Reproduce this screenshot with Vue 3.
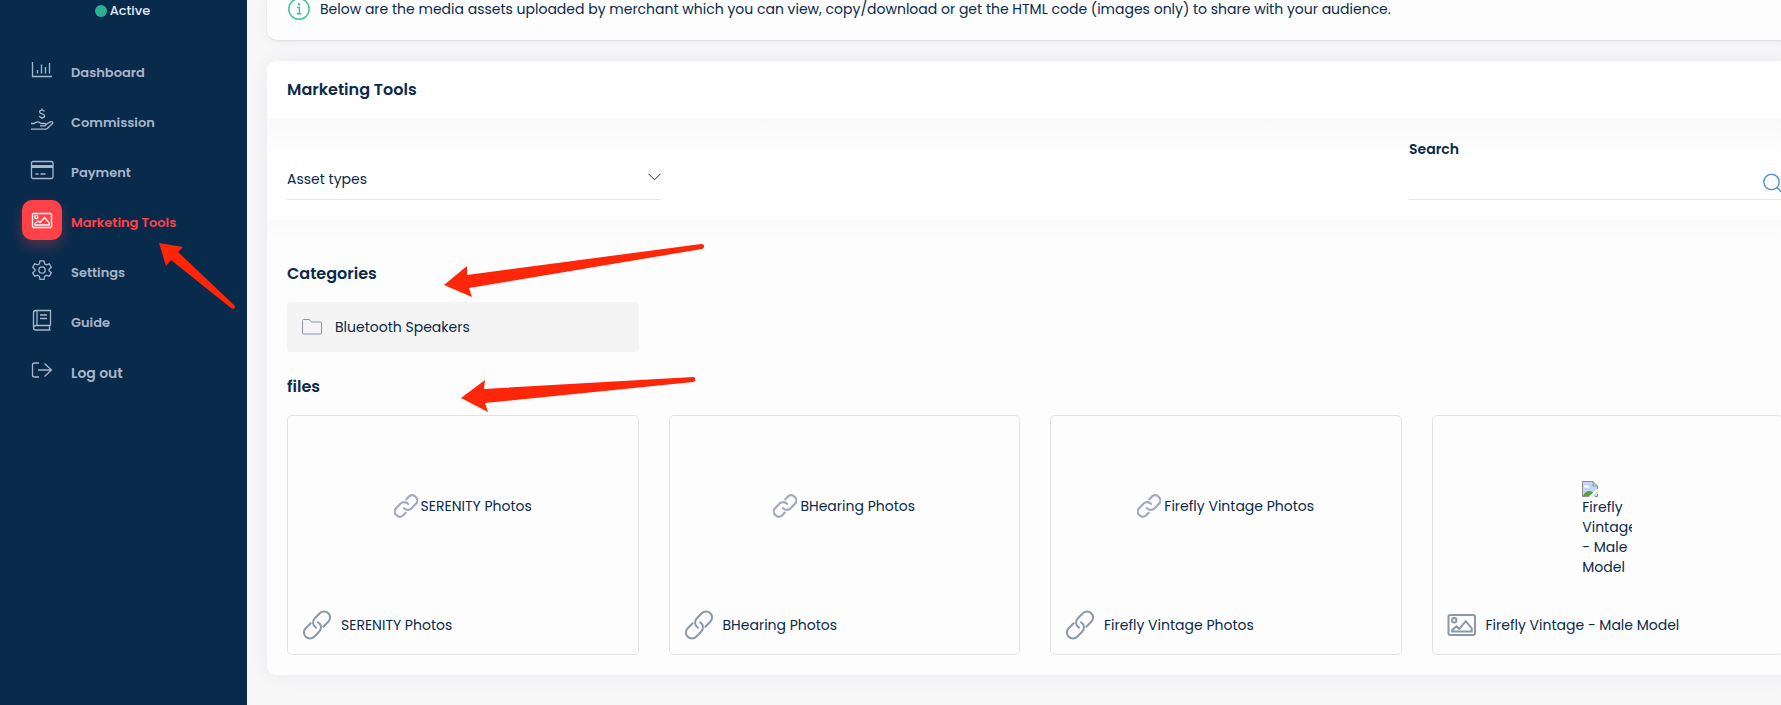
<script setup>
import { ref } from "vue";

const menuList = [
  { icon: "chart", label: "Dashboard" },
  { icon: "hand", label: "Commission" },
  { icon: "card", label: "Payment" },
  { icon: "image", label: "Marketing Tools", active: true },
  { icon: "gear", label: "Settings" },
  { icon: "book", label: "Guide" },
  { icon: "logout", label: "Log out", logout: true }
];

const categories = ["Bluetooth Speakers"];

const files = [
  { type: "link", name: "SERENITY Photos" },
  { type: "link", name: "BHearing Photos" },
  { type: "link", name: "Firefly Vintage Photos" },
  { type: "image", name: "Firefly Vintage - Male Model" }
];

const assetType = ref("");
const search = ref("");
</script>

<template>
  <div class="layout">
    <aside class="sidebar">
      <div class="status"><span class="dot"></span>Active</div>
      <nav class="menu">
        <a
          v-for="item in menuList"
          :key="item.label"
          href="#"
          class="menu-item"
          :class="{ active: item.active, logout: item.logout }"
        >
          <span class="menu-icon">
            <svg v-if="item.icon === 'chart'" width="24" height="24" viewBox="0 0 24 24">
              <path d="M2.500 4v14.500H22M7.500 15.500v-3.500M11.500 15.500V6.500M15.500 15.500V9M19.500 15.500V5" />
            </svg>
            <svg v-else-if="item.icon === 'hand'" width="24" height="24" viewBox="0 0 24 24">
              <path d="M14.500 3.500c-.4-1-1.300-1.400-2.500-1.400-1.400 0-2.400.7-2.400 1.800 0 2.700 5 1.200 5 3.800 0 1.200-1.100 1.900-2.600 1.900-1.300 0-2.300-.6-2.600-1.700M12 .6v1.500M12 9.600v1.500" />
              <path d="M1 15.500h3c2-2 5-2 7 0h3.500c2 0 2 2.300 0 2.300H10M15.800 16.500l4.400-2.600c2-1 3.400.6 2 1.900l-5 4.700c-.6.5-1.200.7-2 .7H1" />
            </svg>
            <svg v-else-if="item.icon === 'card'" width="24" height="24" viewBox="0 0 24 24">
              <rect x="1.500" y="3.500" width="21.500" height="17" rx="1.500" />
              <path d="M1.500 8.500h21.500" stroke-width="3" />
              <path d="M5.500 16h3M10.500 16h5" />
            </svg>
            <svg v-else-if="item.icon === 'image'" width="24" height="24" viewBox="0 0 24 24">
              <rect x="2.500" y="5.500" width="19" height="14" rx="1" />
              <circle cx="6.300" cy="9" r="1.600" />
              <path d="M5 17v-1.500l3-2.500 2 1.500 4.500-5 4.500 5V17z" />
            </svg>
            <svg v-else-if="item.icon === 'gear'" width="24" height="24" viewBox="0 0 24 24">
              <circle cx="12" cy="12" r="3.200" />
              <path d="M10 2.800h4l.6 3 1.800 1 2.900-1 2 3.500-2.300 2v1.500l2.300 2-2 3.500-2.900-1-1.800 1-.6 3h-4l-.6-3-1.800-1-2.900 1-2-3.500 2.300-2v-1.500l-2.300-2 2-3.500 2.900 1 1.800-1z" />
            </svg>
            <svg v-else-if="item.icon === 'book'" width="24" height="24" viewBox="0 0 24 24">
              <path d="M20.500 17.500V2.500H6c-1.500 0-2.500 1-2.500 2.200v15c0 1.400 1 2.300 2.500 2.300h14.500M20.500 17.500H6c-3.300 0-3.300 4.500 0 4.500M19.500 17.500V22M7 2.500v15M10 7h7M10 10.500h7" />
            </svg>
            <svg v-else width="24" height="24" viewBox="0 0 24 24">
              <path d="M9 5H4.500C3.300 5 2.500 5.800 2.500 7v10c0 1.200.8 2 2 2H9M8 12h13.500M14.500 5.500l7 6.500-7 6.500" />
            </svg>
          </span>
          <span class="menu-label">{{ item.label }}</span>
        </a>
      </nav>
    </aside>

    <main class="content">
      <section class="notice">
        <svg class="info-icon" width="22" height="22" viewBox="0 0 22 22">
          <circle cx="11" cy="11" r="10.200" />
          <path d="M9 9.500h2.400v6M8.800 15.700h4.600" />
          <circle class="info-dot" cx="11" cy="6.300" r="1.200" />
        </svg>
        <p>Below are the media assets uploaded by merchant which you can view, copy/download or get the HTML code (images only) to share with your audience.</p>
      </section>

      <section class="panel">
        <header class="panel-header">
          <h1>Marketing Tools</h1>
        </header>

        <form class="filters" @submit.prevent>
          <div class="select-wrap">
            <select v-model="assetType" aria-label="Asset types">
              <option value="">Asset types</option>
              <option value="link">Links</option>
              <option value="image">Images</option>
            </select>
            <svg class="chevron" width="13" height="8" viewBox="0 0 13 8">
              <path d="M.5.800l6 6 6-6" />
            </svg>
          </div>
          <div class="search-field">
            <label for="search">Search</label>
            <div class="search-row">
              <input id="search" v-model="search" type="text" />
              <button type="submit" aria-label="Search">
                <svg width="21" height="22" viewBox="0 0 21 22">
                  <circle cx="9.500" cy="9" r="7.700" />
                  <path d="M15 14.500l6 6" />
                </svg>
              </button>
            </div>
          </div>
        </form>

        <div class="panel-body">
          <h2>Categories</h2>
          <div class="grid">
            <a v-for="category in categories" :key="category" href="#" class="category">
              <svg width="22" height="18" viewBox="0 0 22 18">
                <path d="M1.500 2.500c0-.6.400-1 1-1h5.600l2.600 2.500h8.800c.6 0 1 .4 1 1v10c0 .6-.4 1-1 1h-17c-.6 0-1-.4-1-1z" />
              </svg>
              {{ category }}
            </a>
          </div>

          <h2>files</h2>
          <div class="grid">
            <article v-for="file in files" :key="file.name" class="file">
              <div class="preview">
                <a v-if="file.type === 'link'" href="#" class="preview-link">
                  <svg width="24" height="24" viewBox="1 1 22 22">
                    <path d="M12.300 5.900l2.800-2.900a4.700 4.700 0 0 1 6.400 6.600l-4.600 4.600a4.600 4.600 0 0 1-6.800-.300" />
                    <path d="M11.700 18.100l-2.800 2.900a4.700 4.700 0 0 1-6.400-6.600l4.600-4.600a4.600 4.600 0 0 1 6.800.300" />
                  </svg>
                  {{ file.name }}
                </a>
                <div v-else class="broken">
                  <svg width="16" height="16" viewBox="0 0 16 16">
                    <path fill="#c5d6f5" stroke="none" d="M.5.500h10.500l4.500 4.500v10.500H.5z" />
                    <path fill="#fff" stroke="none" d="M2 6c0-2 2.500-2.500 3-1 1.500-.5 2.500.3 2.500 1.500H2z" />
                    <path fill="#4fa63a" stroke="none" d="M1 15c1.500-3.500 4-5 6-5 1.500 0 3 .5 4 1.500L7.500 15z" />
                    <path fill="none" stroke="#8f8f8f" d="M7.500 15.500h-7V.5h10.500l4.500 4.500v3M11 .5V5h4.500M13 15.500h2.500V13" />
                    <path stroke="#fff" stroke-width="2" d="M8 16l8-7.500" />
                  </svg>
                  <span>{{ file.name }}</span>
                </div>
              </div>
              <footer class="file-footer">
                <svg v-if="file.type === 'link'" width="30" height="30" viewBox="0 0 30 30">
                  <path d="M21.300 16.800l5-5a6 6 0 0 0-8.500-8.500l-4.900 4.900c-3 3-2.200 7.400 1 9.400" />
                  <path d="M8.700 13.200l-5 5a6 6 0 0 0 8.500 8.500l4.900-4.900c3-3 2.200-7.400-1-9.400" />
                </svg>
                <svg v-else width="30" height="30" viewBox="0 0 30 30">
                  <rect x="1.500" y="5" width="26.500" height="20" rx="2" />
                  <circle cx="7.200" cy="10.300" r="2.200" />
                  <path d="M5.200 21.500v-1.500l4.200-3.600 3 2.400 6.300-7.600 6 7v3.300z" />
                </svg>
                {{ file.name }}
              </footer>
            </article>
          </div>
        </div>
      </section>
    </main>

    <!-- pointers laid over the page -->
    <svg class="pointers" aria-hidden="true">
      <path d="M159 243l24 4-5 5 56 53c3 3-1 5-3 3l-60-48-5 6z" />
      <path d="M444 285l23-19v9l234-31c4 0 4 4 1 5l-233 39 3 9z" />
      <path d="M461 398l24-18-1 9 209-12c3 0 3 5 0 5l-208 21 3 9z" />
    </svg>
  </div>
</template>

<style>
body {
  margin: 0;
  background: #f7f7f8;
}
</style>

<style scoped>
.layout {
  position: relative;
  display: flex;
  min-height: 100vh;
  overflow: hidden;
  color: #0a2a4b;
  font-family: Poppins, Inter, sans-serif;
  font-size: 14px;
  line-height: 20px;
}

a {
  color: inherit;
  text-decoration: none;
}

svg {
  flex: none;
  fill: none;
  stroke: currentColor;
}

.sidebar {
  flex: none;
  box-sizing: border-box;
  width: 247px;
  background: #082b4c;
  color: #a9b5c9;
}

.status {
  display: flex;
  align-items: center;
  justify-content: center;
  gap: 3px;
  height: 21px;
  padding-right: 2px;
  color: #e3e9f2;
  font-size: 13px;
  font-weight: 500;
}

.dot {
  width: 12px;
  height: 12px;
  border-radius: 50%;
  background: #2bb092;
}

.menu {
  display: flex;
  flex-direction: column;
  gap: 10px;
  padding: 29px 22px;
}

.menu-item {
  display: flex;
  align-items: center;
  gap: 9px;
  font-size: 13px;
  font-weight: 600;
}

.menu-item.logout {
  font-size: 14px;
}

.menu-icon {
  display: flex;
  align-items: center;
  justify-content: center;
  width: 40px;
  height: 40px;
  border-radius: 10px;
}

.menu-icon svg {
  stroke-width: 1.3;
}

.menu-label {
  padding-top: 5px;
}

.menu-item.active {
  color: #ff4148;
}

.active .menu-icon {
  background: #ff4148;
  box-shadow: 0 6px 14px rgba(255, 65, 72, 0.3);
  color: #fff;
}

/* the page is wider than the viewport, its right edge is cut */
.content {
  flex: 1;
  min-width: 0;
  margin-right: -42px;
  padding: 0 20px 30px;
}

.notice {
  display: flex;
  align-items: center;
  gap: 10px;
  height: 18px;
  padding: 0 21px 22px;
  border-radius: 0 0 10px 10px;
  background: #fdfdfe;
  box-shadow: 0 1px 2px rgba(20, 30, 80, 0.1), 0 0 20px rgba(20, 30, 80, 0.04);
}

.notice p {
  margin: 0;
}

.info-icon {
  color: #3dbf9a;
  stroke-width: 1.4;
}

.info-dot {
  fill: currentColor;
  stroke: none;
}

.panel {
  margin-top: 21px;
  border-radius: 10px;
  background: #fdfdfd;
  box-shadow: 0 0 20px rgba(20, 30, 80, 0.06);
}

.panel-header {
  padding: 19px 20px;
  border-radius: 10px 10px 0 0;
  background: #fff;
}

h1,
h2 {
  margin: 0;
  font-size: 16px;
  font-weight: 600;
  line-height: 20px;
}

.filters {
  display: flex;
  align-items: flex-end;
  justify-content: space-between;
  padding: 20px;
  background: linear-gradient(#f9f9fb, #fff 40px);
}

.select-wrap,
.search-field {
  width: 25%;
}

.select-wrap {
  display: grid;
  align-items: center;
}

select,
.chevron {
  grid-area: 1 / 1;
}

select,
input {
  box-sizing: border-box;
  width: 100%;
  height: 40px;
  padding: 0;
  border: 0;
  outline: none;
  border-radius: 0;
  background: transparent;
  color: inherit;
  font: inherit;
  appearance: none;
}

select {
  padding-bottom: 2px;
  border-bottom: 1px solid #e4e6ea;
}

.chevron {
  justify-self: end;
  margin-bottom: 7px;
  pointer-events: none;
}

label {
  display: block;
  font-weight: 600;
  line-height: 21px;
}

.search-row {
  display: flex;
  align-items: center;
  box-sizing: border-box;
  height: 40px;
  border-bottom: 1px solid #e4e6ea;
}

.search-row input {
  flex: 1;
}

.search-row button {
  display: flex;
  margin: 8px 0 0;
  padding: 0;
  border: 0;
  background: none;
  color: #3d8be0;
  cursor: pointer;
}

.search-row svg {
  stroke-width: 1.3;
}

.panel-body {
  padding: 44px 20px 20px;
  background: linear-gradient(#fafafb, #fdfdfd 20px);
  border-radius: 0 0 10px 10px;
}

.grid {
  display: grid;
  grid-template-columns: repeat(4, minmax(0, 1fr));
  gap: 30px;
  margin: 18px 0 25px;
}

.grid:last-child {
  margin-bottom: 0;
}

.category {
  display: flex;
  align-items: center;
  gap: 12px;
  height: 50px;
  padding: 0 14px;
  border-radius: 4px;
  background: #f4f4f4;
}

.category svg {
  color: #8796ad;
}

.file {
  display: flex;
  flex-direction: column;
  box-sizing: border-box;
  height: 240px;
  border: 1px solid #e1e3e8;
  border-radius: 5px;
}

.preview {
  display: flex;
  flex: 1;
  align-items: center;
  justify-content: center;
}

.preview-link {
  display: flex;
  align-items: center;
  gap: 3px;
}

.preview-link svg {
  color: #a3a9c3;
  stroke-width: 2;
  stroke-linecap: round;
}

/* fixed image box, the alt text runs out below it */
.broken {
  width: 50px;
  height: 50px;
  overflow-x: clip;
}

.broken svg {
  display: block;
}

.broken span {
  display: block;
}

.file-footer {
  display: flex;
  align-items: center;
  gap: 9px;
  height: 58px;
  padding: 0 14px;
}

.file-footer svg {
  color: #8a98aa;
  stroke-width: 2;
  stroke-linecap: round;
}

.pointers {
  position: absolute;
  inset: 0;
  width: 100%;
  height: 100%;
  fill: #fe2608;
  stroke: none;
  pointer-events: none;
}
</style>
